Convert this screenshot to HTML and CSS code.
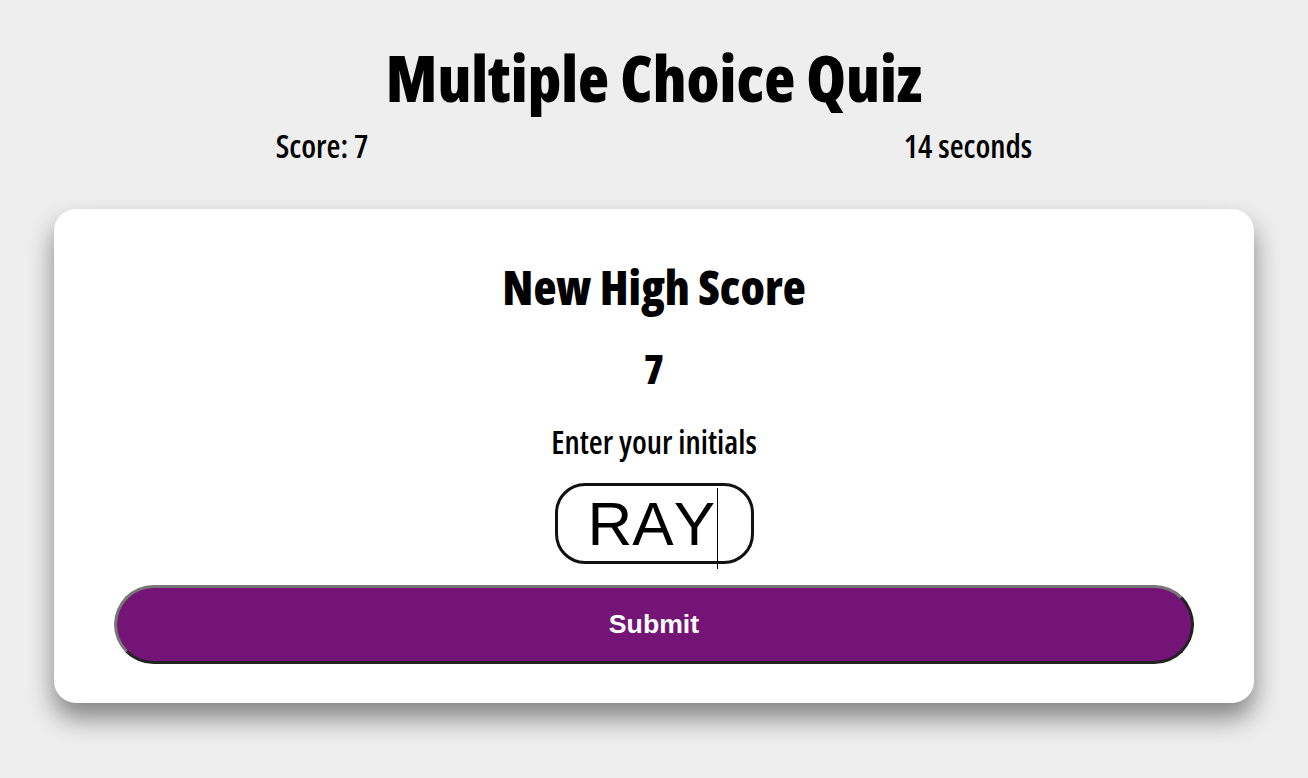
FILE: index.html
```html
<!DOCTYPE html>
<html lang="en">
<head>
<meta charset="utf-8">
<title>Multiple Choice Quiz</title>
<link rel="stylesheet" href="styles.css">
</head>
<body>
<header class="top">
  <h1 class="title">Multiple Choice Quiz</h1>
  <div class="stats">
    <span class="stat">Score: 7</span>
    <span class="stat">14 seconds</span>
  </div>
</header>
<main class="card">
  <h2 class="card-title">New High Score</h2>
  <p class="final-score">7</p>
  <label class="prompt" for="initials">Enter your initials</label>
  <div class="field">
    <input class="initials" id="initials" type="text" value="RAY">
    <span class="caret"></span>
  </div>
  <button class="submit" type="button">Submit</button>
</main>
</body>
</html>
```
FILE: styles.css
```css
html, body {
  background: #eeeeee;
}
body {
  margin: 8px;
  padding-bottom: 60px;
  font-family: "Open Sans", sans-serif;
  font-stretch: 75%;
  font-weight: 550;
  color: #000;
}
.top {
  padding-top: 30px;
}
.title {
  margin: 0;
  font-size: 64px;
  line-height: 80px;
  font-weight: 800;
  text-align: center;
}
.stats {
  margin-top: 8px;
  display: flex;
  justify-content: space-around;
  font-size: 32px;
  line-height: 40px;
}
.card {
  box-sizing: border-box;
  width: 1200px;
  margin: 43px auto 0;
  padding: 48px 60px 39px;
  background: #fff;
  border-radius: 22px;
  box-shadow: 0 15px 26px rgba(0, 0, 0, 0.45);
  display: flex;
  flex-direction: column;
  align-items: center;
}
.card-title {
  margin: 0;
  font-size: 47.5px;
  line-height: 60px;
  font-weight: 800;
}
.final-score {
  margin: 27px 0 0;
  font-size: 40px;
  line-height: 50px;
  font-weight: 800;
}
.prompt {
  margin-top: 28px;
  font-size: 32px;
  line-height: 40px;
}
.field {
  margin-top: 21px;
  position: relative;
}
.initials {
  display: block;
  box-sizing: border-box;
  width: 199px;
  height: 81px;
  padding: 0 0 0 30px;
  border: 3px solid #111;
  border-radius: 30px;
  background: #fff;
  font-family: "Liberation Sans", Arial, sans-serif;
  font-stretch: normal;
  font-weight: normal;
  font-kerning: none;
  font-size: 62px;
  color: #000;
  caret-color: transparent;
  outline: none;
}
.caret {
  position: absolute;
  left: 162px;
  top: 5px;
  width: 1px;
  height: 81px;
  background: #000;
}
.submit {
  margin-top: 21px;
  box-sizing: border-box;
  width: 100%;
  height: 79px;
  border: 3px solid;
  border-color: #777777 #222222 #222222 #777777;
  border-radius: 40px;
  background: #751477;
  color: #fff;
  font-family: "Liberation Sans", Arial, sans-serif;
  font-stretch: normal;
  font-size: 26.67px;
  font-weight: bold;
}
```
